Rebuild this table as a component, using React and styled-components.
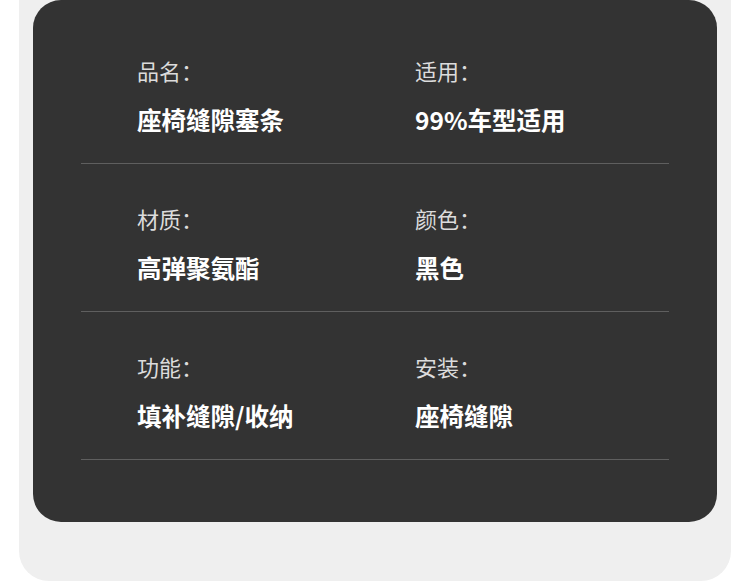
import React from "react";
import styled, { createGlobalStyle } from "styled-components";

const Global = createGlobalStyle`
  html, body { margin: 0; padding: 0; background: #ffffff; }
  body { font-family: "Noto Sans CJK SC", "Noto Sans", sans-serif; }
`;

const Panel = styled.div`
  margin-left: 19px;
  width: 712px;
  height: 581px;
  background: #efefef;
  border-radius: 0 0 30px 30px;
  padding: 0 14px;
  box-sizing: border-box;
`;

const Card = styled.div`
  height: 522px;
  background: #333333;
  border-radius: 28px;
  padding: 16px 48px 0;
  box-sizing: border-box;
`;

const Row = styled.div`
  display: grid;
  grid-template-columns: 278px 1fr;
  padding: 43px 0 31px 56px;
  border-bottom: 1px solid #5f5f5f;
`;

const Cell = styled.div`
  display: flex;
  flex-direction: column;
  gap: 27px;
`;

const Label = styled.div`
  font-size: 22px;
  line-height: 22px;
  color: #dcdcdc;
  font-weight: 400;
`;

const Value = styled.div`
  font-size: 24.5px;
  line-height: 24px;
  color: #ffffff;
  font-weight: 700;
`;

const rows = [
  [["品名：", "座椅缝隙塞条"], ["适用：", "99%车型适用"]],
  [["材质：", "高弹聚氨酯"], ["颜色：", "黑色"]],
  [["功能：", "填补缝隙/收纳"], ["安装：", "座椅缝隙"]],
];

export default function App() {
  return (
    <>
      <Global />
      <Panel>
        <Card>
          {rows.map((r, i) => (
            <Row key={i}>
              {r.map(([l, v]) => (
                <Cell key={l}>
                  <Label>{l}</Label>
                  <Value>{v}</Value>
                </Cell>
              ))}
            </Row>
          ))}
        </Card>
      </Panel>
    </>
  );
}
